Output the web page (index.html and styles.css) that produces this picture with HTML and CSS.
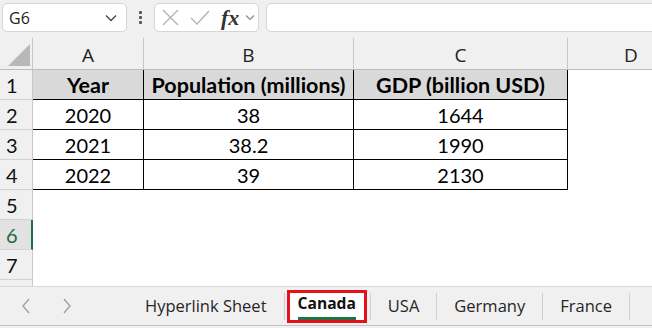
FILE: index.html
```html
<!DOCTYPE html>
<html>
<head>
<meta charset="utf-8">
<link rel="stylesheet" href="styles.css">
</head>
<body>
<div class="app">
  <div class="toolbar">
    <div class="namebox">
      <span class="ref">G6</span>
      <svg class="chev" width="12" height="8" viewBox="0 0 12 8"><polyline points="1,1.5 6,6.5 11,1.5" fill="none" stroke="#444" stroke-width="1.3"/></svg>
    </div>
    <div class="dots"><span></span><span></span><span></span></div>
    <div class="fxbox">
      <svg class="ic-x" width="19" height="19" viewBox="0 0 19 19"><path d="M2 2 L17 17 M17 2 L2 17" stroke="#b4b4b4" stroke-width="1.4" fill="none"/></svg>
      <svg class="ic-ok" width="20" height="16" viewBox="0 0 20 16"><polyline points="1,8 7,14 19,1" stroke="#b4b4b4" stroke-width="1.4" fill="none"/></svg>
      <span class="fx">fx</span>
      <svg class="ic-dd" width="10" height="7" viewBox="0 0 10 7"><polyline points="1,1.5 5,5.5 9,1.5" fill="none" stroke="#888" stroke-width="1.1"/></svg>
    </div>
    <div class="formula"></div>
  </div>

  <div class="sheet">
    <div class="grid">
      <div class="corner"><svg width="33" height="32" viewBox="0 0 33 32"><polygon points="8,28 30,28 30,6" fill="#b8b8b8"/></svg></div>
      <div class="colh">A</div>
      <div class="colh">B</div>
      <div class="colh">C</div>
      <div class="colh last">D</div>

      <div class="rowh">1</div>
      <div class="cell t th">Year</div>
      <div class="cell t th">Population (millions)</div>
      <div class="cell t th">GDP (billion USD)</div>
      <div class="cell"></div>

      <div class="rowh">2</div>
      <div class="cell t">2020</div>
      <div class="cell t">38</div>
      <div class="cell t">1644</div>
      <div class="cell"></div>

      <div class="rowh">3</div>
      <div class="cell t">2021</div>
      <div class="cell t">38.2</div>
      <div class="cell t">1990</div>
      <div class="cell"></div>

      <div class="rowh">4</div>
      <div class="cell t">2022</div>
      <div class="cell t">39</div>
      <div class="cell t">2130</div>
      <div class="cell"></div>

      <div class="rowh">5</div>
      <div class="cell"></div><div class="cell"></div><div class="cell"></div><div class="cell"></div>

      <div class="rowh sel">6</div>
      <div class="cell"></div><div class="cell"></div><div class="cell"></div><div class="cell"></div>

      <div class="rowh">7</div>
      <div class="cell"></div><div class="cell"></div><div class="cell"></div><div class="cell"></div>

      <div class="rowh"></div>
      <div class="cell"></div><div class="cell"></div><div class="cell"></div><div class="cell"></div>
    </div>
  </div>

  <div class="tabbar">
    <div class="nav">
      <svg width="10" height="16" viewBox="0 0 10 16"><polyline points="8,1 2,8 8,15" fill="none" stroke="#9a9a9a" stroke-width="1.2"/></svg>
      <svg width="10" height="16" viewBox="0 0 10 16"><polyline points="2,1 8,8 2,15" fill="none" stroke="#9a9a9a" stroke-width="1.2"/></svg>
    </div>
    <div class="tab">Hyperlink Sheet</div>
    <div class="sep"></div>
    <div class="tab active"><span class="lbl">Canada</span></div>
    <div class="sep"></div>
    <div class="tab">USA</div>
    <div class="sep"></div>
    <div class="tab">Germany</div>
    <div class="sep"></div>
    <div class="tab">France</div>
    <div class="sep"></div>
  </div>
</div>
</body>
</html>
```

FILE: styles.css
```css
* { box-sizing: border-box; }
html, body { margin: 0; padding: 0; }
body {
  width: 652px;
  height: 328px;
  overflow: hidden;
  background: #ffffff;
  font-family: "Open Sans", "Noto Sans", sans-serif;
  color: #000;
}
.app { width: 652px; height: 328px; display: flex; flex-direction: column; background: #f0f0f0; }

.toolbar {
  height: 38px;
  flex: none;
  display: flex;
  align-items: flex-start;
  padding: 3px 0 0 2px;
  background: #f0f0f0;
}
.namebox {
  width: 125px;
  height: 29px;
  background: #fff;
  border: 1px solid #d6d6d6;
  border-radius: 5px;
  display: flex;
  align-items: center;
  justify-content: space-between;
  padding: 0 9px 0 6px;
}
.ref { font-size: 16px; color: #222; }
.dots {
  width: 27px;
  height: 29px;
  display: flex;
  flex-direction: column;
  align-items: center;
  justify-content: center;
  gap: 2px;
}
.dots span { width: 3px; height: 3px; background: #555; border-radius: 1px; }
.fxbox {
  width: 105px;
  height: 29px;
  background: #fff;
  border: 1px solid #d6d6d6;
  border-radius: 5px;
  display: flex;
  align-items: center;
  padding: 0 0 0 6px;
}
.ic-x { margin-right: 10px; }
.ic-ok { margin-right: 11px; }
.fx {
  font-family: "Liberation Serif", "DejaVu Serif", serif;
  font-style: italic;
  font-weight: 700;
  font-size: 22px;
  color: #333;
  line-height: 1;
  margin-right: 6px;
}
.formula {
  margin-left: 7px;
  flex: 1;
  margin-right: -10px;
  height: 29px;
  background: #fff;
  border: 1px solid #d6d6d6;
  border-radius: 5px;
}

.sheet { height: 248px; flex: none; overflow: hidden; background: #fff; }
.grid {
  display: grid;
  grid-template-columns: 33px 111px 210px 214px 126px;
  grid-template-rows: 32px repeat(8, 30px);
}
.corner { background: #f0f0f0; border-right: 1px solid #c8c8c8; border-bottom: 1px solid #bdbdbd; }
.corner svg { display: block; }
.colh {
  background: #f0f0f0;
  border-right: 1px solid #c8c8c8;
  border-bottom: 1px solid #bdbdbd;
  display: flex;
  align-items: center;
  justify-content: center;
  font-size: 19px;
  color: #222;
  padding-top: 3px;
}
.colh.last { border-right: none; }
.rowh {
  background: #f0f0f0;
  border-right: 1px solid #c8c8c8;
  border-bottom: 1px solid #d2d2d2;
  font-family: "Lato", "Liberation Sans", sans-serif;
  font-size: 20px;
  color: #111;
  display: flex;
  align-items: center;
  padding-left: 6px;
}
.rowh.sel {
  background: #e2e2e2;
  color: #1e6b41;
  border-right: 2px solid #1e7145;
}
.cell {
  background: #fff;
  font-family: "Lato", "Liberation Sans", sans-serif;
  font-size: 20px;
  display: flex;
  align-items: center;
  justify-content: center;
}
.cell.t { border-right: 1px solid #000; border-bottom: 1px solid #000; }
.cell.th { background: #d9d9d9; font-weight: 700; font-size: 21.5px; }

.tabbar {
  height: 40px;
  flex: none;
  background: #f0f0f0;
  border-top: 1px solid #d8d8d8;
  border-bottom: 1px solid #c4c4c4;
  display: flex;
  align-items: center;
}
.nav {
  width: 128px;
  display: flex;
  gap: 31px;
  padding-left: 21px;
}
.nav svg { display: block; }
.tab {
  font-size: 16.5px;
  color: #262626;
  padding: 0 17px 2px 17px;
}
.sep { width: 1px; height: 27px; background: #cfcfcf; }
.tab.active {
  height: 33px;
  margin: 0 3px 0 2px;
  padding: 0 8px;
  background: #fff;
  border: 3px solid #e3131b;
  display: flex;
  align-items: center;
  font-size: 15.6px;
}
.tab.active .lbl {
  font-weight: 700;
  color: #111;
  padding-bottom: 4px;
  border-bottom: 3px solid #217346;
  line-height: 20px;
}
```
